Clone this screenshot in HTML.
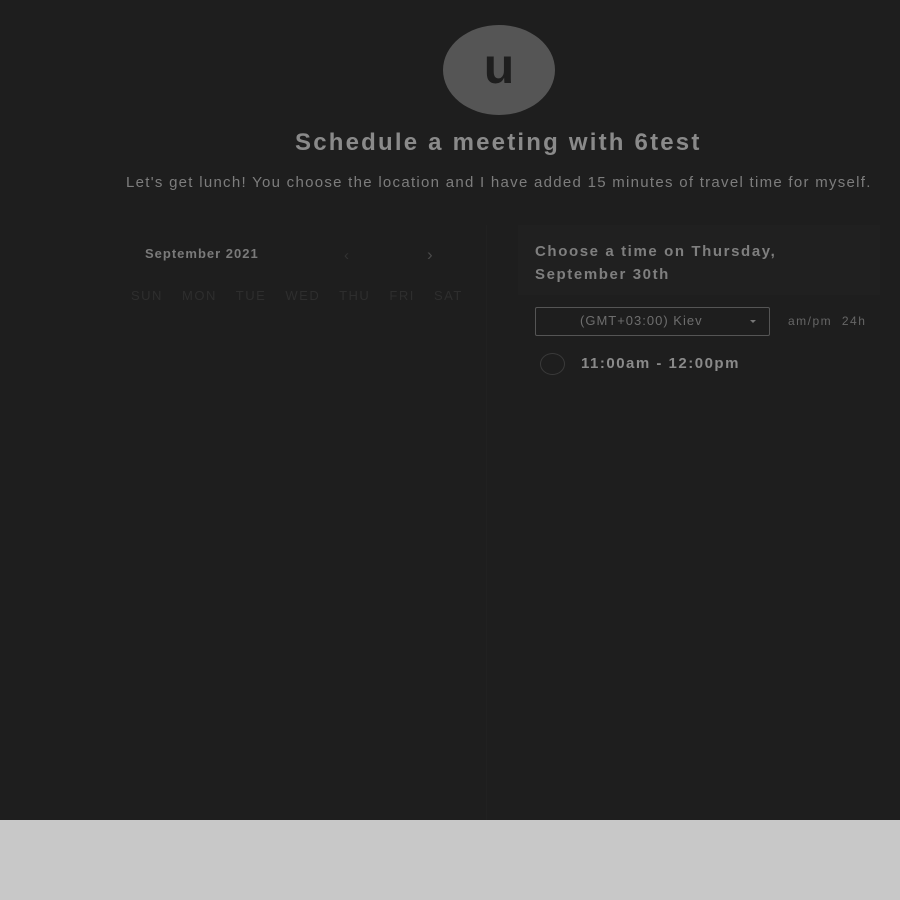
<!DOCTYPE html>
<html><head><style>
body{margin:0;width:900px;height:900px;background:#c8c8c8;font-family:"Liberation Sans",sans-serif;overflow:hidden;position:relative}
.top{position:absolute;left:0;top:0;width:900px;height:820px;background:#1e1e1e}
.av{position:absolute;left:443px;top:25px;width:112px;height:90px;border-radius:50%;background:#555;color:#1e1e1e;font-size:50px;font-weight:bold;text-align:center;line-height:82px}
.abs{position:absolute;white-space:nowrap}
</style></head><body>
<div class="top">
<div class="av">u</div>
<div class="abs" style="left:295px;top:129px;font-size:24px;letter-spacing:2.2px;font-weight:bold;color:#8a8a8a">Schedule a meeting with 6test</div>
<div class="abs" style="left:126px;top:174px;font-size:15px;letter-spacing:1.28px;color:#7d7d7d">Let's get lunch! You choose the location and I have added 15 minutes of travel time for myself.</div>
<div class="abs" style="left:145px;top:246px;font-size:13px;letter-spacing:1px;font-weight:bold;color:#7a7a7a">September 2021</div>
<div class="abs" style="left:344px;top:247px;font-size:15px;color:#333">&lsaquo;</div>
<div class="abs" style="left:427px;top:245px;font-size:17px;color:#4a4a4a">&rsaquo;</div>
<div class="abs" style="left:131px;top:288px;font-size:13px;color:#2e2e2e;letter-spacing:1.5px;word-spacing:14px">SUN MON TUE WED THU FRI SAT</div>
<div class="abs" style="left:486px;top:225px;width:1px;height:595px;background:#212121"></div>
<div class="abs" style="left:518px;top:225px;width:362px;height:70px;background:#202020"></div>
<div class="abs" style="left:535px;top:240px;font-size:15px;letter-spacing:1.6px;font-weight:bold;color:#7f7f7f;line-height:23px">Choose a time on Thursday,<br>September 30th</div>
<div class="abs" style="left:535px;top:307px;width:233px;height:27px;border:1px solid #555;border-radius:2px"></div>
<div class="abs" style="left:580px;top:313px;font-size:13px;letter-spacing:1px;color:#6e6e6e">(GMT+03:00) Kiev</div>
<div class="abs" style="left:750px;top:320px;width:0;height:0;border-left:3px solid transparent;border-right:3px solid transparent;border-top:3px solid #777"></div>
<div class="abs" style="left:788px;top:314px;font-size:12px;letter-spacing:1.5px;color:#666">am/pm&nbsp; 24h</div>
<div class="abs" style="left:540px;top:353px;width:23px;height:20px;border:1px solid #3a3a3a;border-radius:50%"></div>
<div class="abs" style="left:581px;top:355px;font-size:15px;letter-spacing:1.5px;font-weight:bold;color:#8a8a8a">11:00am - 12:00pm</div>
</div>
</body></html>
